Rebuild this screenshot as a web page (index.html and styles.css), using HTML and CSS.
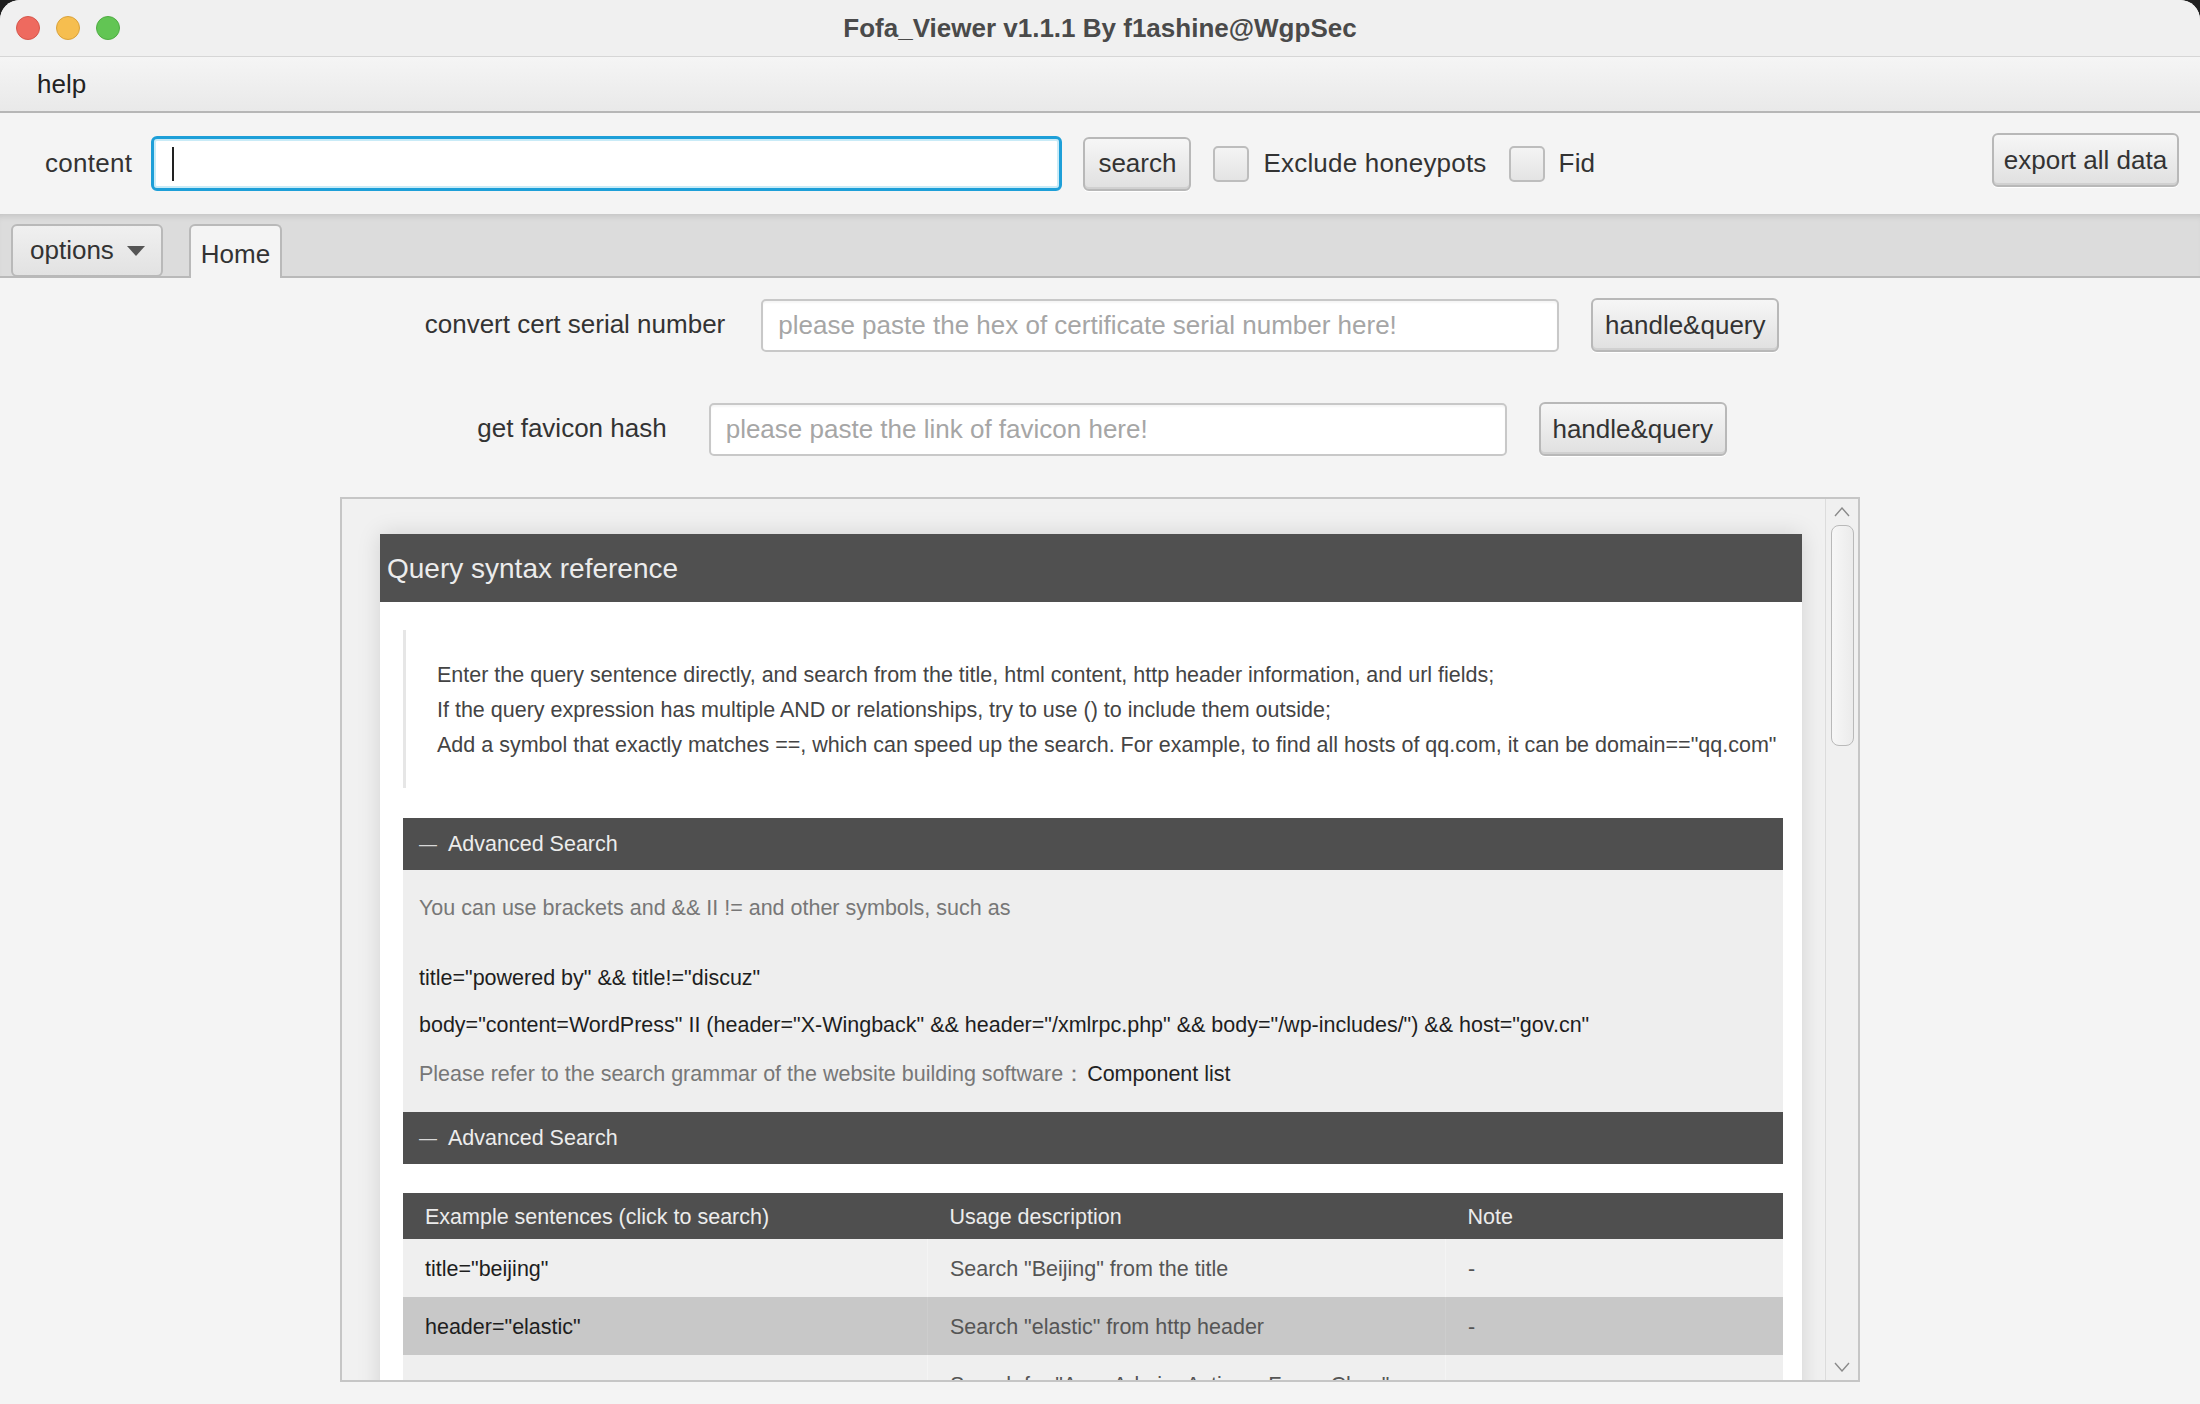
FILE: index.html
```html
<!DOCTYPE html>
<html lang="en">
<head>
  <meta charset="UTF-8">
  <title>Fofa_Viewer v1.1.1 By f1ashine@WgpSec</title>
  <link rel="stylesheet" href="styles.css">
</head>
<body>
  <div class="window">
    <div class="titlebar">
      <div class="lights">
        <span class="light red"></span>
        <span class="light yellow"></span>
        <span class="light green"></span>
      </div>
      <div class="title">Fofa_Viewer v1.1.1 By f1ashine@WgpSec</div>
    </div>

    <div class="menubar">
      <span class="menu-item">help</span>
    </div>

    <div class="toolbar">
      <span class="field-label">content</span>
      <div class="text-field focused"><span class="caret"></span></div>
      <button class="btn">search</button>
      <label class="check"><span class="box"></span>Exclude honeypots</label>
      <label class="check"><span class="box"></span>Fid</label>
      <button class="btn export">export all data</button>
    </div>

    <div class="tabbar">
      <button class="options">options
        <svg width="18" height="10" viewBox="0 0 18 10"><path d="M0 0h18L9 10z" fill="#555"/></svg>
      </button>
      <div class="tab active">Home</div>
    </div>

    <div class="home">
      <div class="tool-row">
        <span class="row-label">convert cert serial number</span>
        <input class="row-input" type="text" placeholder="please paste the hex of certificate serial number here!">
        <button class="btn row-btn">handle&amp;query</button>
      </div>
      <div class="tool-row second">
        <span class="row-label">get favicon hash</span>
        <input class="row-input" type="text" placeholder="please paste the link of favicon here!">
        <button class="btn row-btn">handle&amp;query</button>
      </div>

      <div class="webview">
        <div class="web-page">
          <div class="card">
            <div class="card-head">Query syntax reference</div>
            <div class="card-body">
              <div class="quote">
                <p>Enter the query sentence directly, and search from the title, html content, http header information, and url fields;</p>
                <p>If the query expression has multiple AND or relationships, try to use () to include them outside;</p>
                <p>Add a symbol that exactly matches ==, which can speed up the search. For example, to find all hosts of qq.com, it can be domain=="qq.com"</p>
              </div>

              <div class="section-head"><span class="dash">—</span>Advanced Search</div>
              <div class="section-body">
                <p class="muted">You can use brackets and &amp;&amp; II != and other symbols, such as</p>
                <p class="code first">title="powered by" &amp;&amp; title!="discuz"</p>
                <p class="code">body="content=WordPress" II (header="X-Wingback" &amp;&amp; header="/xmlrpc.php" &amp;&amp; body="/wp-includes/") &amp;&amp; host="gov.cn"</p>
                <p class="muted last">Please refer to the search grammar of the website building software：<span class="link">Component list</span></p>
              </div>

              <div class="section-head"><span class="dash">—</span>Advanced Search</div>
              <table class="examples">
                <thead>
                  <tr><th class="c1">Example sentences (click to search)</th><th class="c2">Usage description</th><th>Note</th></tr>
                </thead>
                <tbody>
                  <tr><td class="c1">title="beijing"</td><td class="c2">Search "Beijing" from the title</td><td>-</td></tr>
                  <tr class="alt"><td class="c1">header="elastic"</td><td class="c2">Search "elastic" from http header</td><td>-</td></tr>
                  <tr><td class="c1">body="App_Admin_Actions_Form_Clear"</td><td class="c2">Search for "App_Admin_Actions_Form_Clear" from the html body of the website pages, including hidden fields</td><td>-</td></tr>
                </tbody>
              </table>
            </div>
          </div>
        </div>
        <div class="scrollbar">
          <svg class="arrow" width="16" height="10" viewBox="0 0 16 10"><path d="M1 9L8 1l7 8" fill="none" stroke="#8a8a8a" stroke-width="1.4"/></svg>
          <div class="thumb"></div>
          <div class="track-fill"></div>
          <svg class="arrow" width="16" height="10" viewBox="0 0 16 10"><path d="M1 1l7 8 7-8" fill="none" stroke="#8a8a8a" stroke-width="1.4"/></svg>
        </div>
      </div>
    </div>
  </div>
</body>
</html>
```

FILE: styles.css
```css
html {
  background-color: #1f1f1f;
}

body {
  margin: 0;
  font-family: 'Liberation Sans', Arial, Helvetica, sans-serif;
  color: #333;
}

.window {
  width: 2200px;
  height: 1404px;
  background-color: #f4f4f4;
  border-radius: 20px 20px 0 0;
  overflow: hidden;
}

/* title bar */
.titlebar {
  height: 56px;
  border-bottom: 1px solid #d6d6d6;
  background-color: #f0f0f0;
  display: flex;
  align-items: center;
}

.lights {
  display: flex;
  gap: 16px;
  padding-left: 16px;
}

.light {
  width: 24px;
  height: 24px;
  border-radius: 50%;
  box-sizing: border-box;
}

.light.red { background-color: #ee6a5f; border: 1px solid #d5574c; }
.light.yellow { background-color: #f6be4f; border: 1px solid #d9a23b; }
.light.green { background-color: #62c554; border: 1px solid #4fac43; }

.title {
  flex: 1;
  text-align: center;
  margin-right: 120px;
  font-size: 26px;
  font-weight: bold;
  color: #4a4a4a;
}

/* menu */
.menubar {
  height: 54px;
  background: linear-gradient(#f5f5f5, #e9e9e9);
  border-bottom: 2px solid #b6b6b6;
  display: flex;
  align-items: center;
  padding-left: 37px;
}

.menu-item {
  font-size: 26px;
  color: #222;
}

/* toolbar */
.toolbar {
  height: 101px;
  display: flex;
  align-items: center;
  padding: 0 21px 0 45px;
  box-sizing: border-box;
}

.field-label {
  font-size: 26px;
  letter-spacing: 0.3px;
  color: #333;
  margin-right: 19px;
}

.text-field {
  width: 911px;
  height: 55px;
  box-sizing: border-box;
  background-color: #fff;
  border-radius: 6px;
  display: flex;
  align-items: center;
  padding-left: 18px;
}

.text-field.focused {
  border: 3px solid #1d9fd8;
  box-shadow: inset 0 0 0 2px #c9ebf7;
}

.caret {
  width: 2px;
  height: 34px;
  background-color: #222;
}

.btn {
  font-family: inherit;
  font-size: 26px;
  color: #333;
  background: linear-gradient(#f6f6f6, #e0e0e0);
  border: 2px solid #b8b8b8;
  border-radius: 6px;
  box-shadow: inset 0 -2px 0 #d0d0d0, 0 1px 0 #fff;
  padding: 0 13px;
  height: 54px;
  cursor: pointer;
}

.toolbar .btn {
  margin-left: 21px;
}

.check {
  display: flex;
  align-items: center;
  font-size: 26px;
  letter-spacing: 0.2px;
  color: #333;
  margin-left: 22px;
}

.box {
  width: 36px;
  height: 36px;
  box-sizing: border-box;
  border: 2px solid #bdbdbd;
  border-radius: 5px;
  background: linear-gradient(#f4f4f4, #e4e4e4);
  margin-right: 14px;
}

.toolbar .export {
  margin-left: auto;
  margin-bottom: 7px;
  width: 187px;
  padding: 0;
}

/* tabs */
.tabbar {
  height: 64px;
  box-sizing: border-box;
  background-color: #dcdcdc;
  box-shadow: inset 0 6px 6px -4px rgba(0, 0, 0, 0.12);
  border-bottom: 2px solid #b9b9b9;
  display: flex;
  align-items: flex-end;
  padding-left: 11px;
}

.options {
  font-family: inherit;
  font-size: 26px;
  color: #333;
  width: 152px;
  height: 53px;
  margin-bottom: -1px;
  box-sizing: border-box;
  background: linear-gradient(#f0f0f0, #e2e2e2);
  border: 2px solid #b9b9b9;
  border-radius: 6px;
  display: flex;
  align-items: center;
  justify-content: space-between;
  padding: 0 16px 0 17px;
}

.tab {
  margin-left: 26px;
  margin-bottom: -2px;
  width: 93px;
  height: 54px;
  box-sizing: border-box;
  border: 2px solid #b9b9b9;
  border-bottom: none;
  border-radius: 6px 6px 0 0;
  background-color: #f4f4f4;
  font-size: 26px;
  color: #333;
  display: flex;
  align-items: center;
  justify-content: center;
  padding-top: 4px;
}

/* home tab */
.home {
  padding-top: 20px;
  display: flex;
  flex-direction: column;
  align-items: center;
}

.tool-row {
  display: flex;
  align-items: center;
  height: 54px;
  margin-left: 4px;
}

.tool-row.second {
  margin-top: 50px;
}

.row-label {
  font-size: 26px;
  color: #333;
  margin-right: 36px;
  padding-bottom: 2px;
}

.tool-row.second .row-label {
  margin-right: 42px;
}

.row-input {
  width: 798px;
  height: 53px;
  box-sizing: border-box;
  border: 2px solid #c8c8c8;
  border-radius: 5px;
  background-color: #fff;
  font-family: inherit;
  font-size: 26px;
  padding: 0 15px;
  box-shadow: inset 0 2px 2px rgba(0, 0, 0, 0.04);
}

.row-input::placeholder {
  color: #a6a6a6;
}

.row-btn {
  margin-left: 32px;
  width: 188px;
  padding: 0;
}

/* embedded web view */
.webview {
  margin-top: 41px;
  width: 1520px;
  height: 885px;
  box-sizing: border-box;
  border: 2px solid #c6c6c6;
  display: flex;
  overflow: hidden;
}

.web-page {
  flex: 1;
  background-color: #f1f1f1;
  padding: 35px 23px 0 38px;
  overflow: hidden;
}

.card {
  background-color: #fff;
  box-shadow: 0 0 22px rgba(0, 0, 0, 0.13);
  font-size: 21.5px;
  line-height: 35px;
}

.card p {
  margin: 0;
}

.card-head {
  height: 68px;
  background-color: #505050;
  color: #ececec;
  font-size: 28px;
  display: flex;
  align-items: center;
  padding-left: 7px;
}

.card-body {
  padding: 28px 19px 0 23px;
}

.quote {
  border-left: 3px solid #e6e6e6;
  padding: 28px 0 25px 31px;
  color: #444;
}

.section-head {
  height: 52px;
  margin-top: 30px;
  background-color: #4f4f4f;
  color: #ececec;
  display: flex;
  align-items: center;
  padding-left: 16px;
}

.dash {
  font-size: 18px;
  margin-right: 11px;
  color: #d8d8d8;
}

.section-body {
  background-color: #eeeeee;
  padding: 21px 16px 20px;
  color: #777;
}

.section-body + .section-head {
  margin-top: 0;
}

.section-body .code {
  color: #1e1e1e;
  margin-top: 12px;
}

.section-body .code.first {
  margin-top: 35px;
}

.section-body .last {
  margin-top: 14px;
}

.link {
  color: #222;
  margin-left: 2px;
}

.examples {
  margin-top: 29px;
  width: 100%;
  border-collapse: collapse;
  font-size: 21.5px;
  line-height: 35px;
}

.examples th {
  background-color: #4f4f4f;
  color: #ececec;
  font-weight: normal;
  text-align: left;
  height: 46px;
  padding: 2px 22px 0;
  box-sizing: border-box;
}

.examples td {
  background-color: #efefef;
  color: #555;
  padding: 12.5px 22px 10.5px;
  vertical-align: middle;
  border-left: 1px solid #f4f4f4;
}

.examples td:first-child {
  border-left: none;
}

.examples tr.alt td {
  background-color: #c8c8c8;
  border-left-color: #cdcdcd;
}

.examples .c1 {
  width: 480px;
}

.examples td.c1 {
  color: #1e1e1e;
}

.examples .c2 {
  width: 473px;
}

/* scroll bar */
.scrollbar {
  width: 32px;
  background-color: #f0f0f0;
  border-left: 1px solid #dcdcdc;
  display: flex;
  flex-direction: column;
  align-items: center;
}

.scrollbar .arrow {
  margin: 8px 0;
}

.thumb {
  width: 23px;
  height: 221px;
  box-sizing: border-box;
  border: 1px solid #b9b9b9;
  border-radius: 8px;
  background: linear-gradient(90deg, #f7f7f7, #ebebeb);
}

.track-fill {
  flex: 1;
}
```
